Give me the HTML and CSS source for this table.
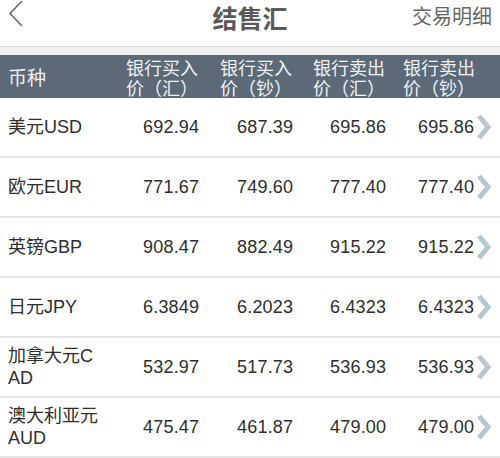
FILE: index.html
```html
<!DOCTYPE html>
<html lang="zh">
<head>
<meta charset="utf-8">
<title>结售汇</title>
<link rel="stylesheet" href="styles.css">
</head>
<body>
<div class="nav">
  <svg class="back" width="16" height="27" viewBox="0 0 16 27"><path d="M14 1 L2 13.5 L14 26" fill="none" stroke="#6a6a6a" stroke-width="1.6"/></svg>
  <div class="title">结售汇</div>
  <div class="detail">交易明细</div>
</div>
<div class="gap"></div>
<div class="thead">
  <div class="c0 single">币种</div>
  <div class="c1">银行买入<br>价（汇）</div>
  <div class="c2">银行买入<br>价（钞）</div>
  <div class="c3">银行卖出<br>价（汇）</div>
  <div class="c4">银行卖出<br>价（钞）</div>
</div>
<div class="rows">
  <div class="row"><div class="c0">美元USD</div><div class="n c1">692.94</div><div class="n c2">687.39</div><div class="n c3">695.86</div><div class="n c4">695.86</div><svg class="chev" width="18" height="28" viewBox="0 0 18 28"><path d="M4 3 L13 14 L4 25" fill="none" stroke="#b7c7cf" stroke-width="5"/></svg></div>
  <div class="row"><div class="c0">欧元EUR</div><div class="n c1">771.67</div><div class="n c2">749.60</div><div class="n c3">777.40</div><div class="n c4">777.40</div><svg class="chev" width="18" height="28" viewBox="0 0 18 28"><path d="M4 3 L13 14 L4 25" fill="none" stroke="#b7c7cf" stroke-width="5"/></svg></div>
  <div class="row"><div class="c0">英镑GBP</div><div class="n c1">908.47</div><div class="n c2">882.49</div><div class="n c3">915.22</div><div class="n c4">915.22</div><svg class="chev" width="18" height="28" viewBox="0 0 18 28"><path d="M4 3 L13 14 L4 25" fill="none" stroke="#b7c7cf" stroke-width="5"/></svg></div>
  <div class="row"><div class="c0">日元JPY</div><div class="n c1">6.3849</div><div class="n c2">6.2023</div><div class="n c3">6.4323</div><div class="n c4">6.4323</div><svg class="chev" width="18" height="28" viewBox="0 0 18 28"><path d="M4 3 L13 14 L4 25" fill="none" stroke="#b7c7cf" stroke-width="5"/></svg></div>
  <div class="row"><div class="c0">加拿大元CAD</div><div class="n c1">532.97</div><div class="n c2">517.73</div><div class="n c3">536.93</div><div class="n c4">536.93</div><svg class="chev" width="18" height="28" viewBox="0 0 18 28"><path d="M4 3 L13 14 L4 25" fill="none" stroke="#b7c7cf" stroke-width="5"/></svg></div>
  <div class="row"><div class="c0">澳大利亚元AUD</div><div class="n c1">475.47</div><div class="n c2">461.87</div><div class="n c3">479.00</div><div class="n c4">479.00</div><svg class="chev" width="18" height="28" viewBox="0 0 18 28"><path d="M4 3 L13 14 L4 25" fill="none" stroke="#b7c7cf" stroke-width="5"/></svg></div>
</div>
</body>
</html>
```
FILE: styles.css
```css
html, body {
  margin: 0;
  padding: 0;
  background: #ffffff;
  font-family: "Liberation Sans", "Noto Sans CJK SC", sans-serif;
  overflow: hidden;
}
.nav {
  height: 46px;
  display: grid;
  grid-template-columns: 1fr auto 1fr;
  align-items: start;
  background: #fff;
  border-bottom: 1px solid #dcdcdc;
}
.back {
  margin: 0 0 0 8px;
  display: block;
}
.title {
  padding-top: 1px;
  text-align: center;
  font-size: 25px;
  line-height: 32px;
  font-weight: bold;
  color: #5a5a5a;
  font-family: "Noto Sans CJK SC", sans-serif;
}
.detail {
  justify-self: end;
  margin-right: 8px;
  margin-top: 2px;
  font-size: 20px;
  line-height: 28px;
  color: #676767;
  font-family: "Noto Sans CJK SC", sans-serif;
}
.gap {
  height: 8px;
  background: #f1f1f1;
}
.thead, .row {
  display: grid;
  grid-template-columns: 118px 94px 93px 90px 1fr 20px;
  padding-left: 8px;
  align-items: center;
}
.thead {
  height: 43px;
  background: #5c6977;
  color: #eef1f4;
  font-size: 18px;
  line-height: 20px;
  font-family: "Noto Sans CJK SC", sans-serif;
}
.thead .single {
  font-size: 19px;
}
.row {
  height: 58px;
  border-bottom: 2px solid #e6e6e6;
  color: #2e2e2e;
  font-size: 18px;
  line-height: 22px;
}
.row .c0 {
  font-size: 18px;
  word-break: break-all;
  padding-right: 23px;
}
.n {
  padding-left: 17px;
  letter-spacing: 0.2px;
}
.row .c4 {
  padding-left: 15px;
}
.chev {
  display: block;
  margin-left: -5px;
}
```
